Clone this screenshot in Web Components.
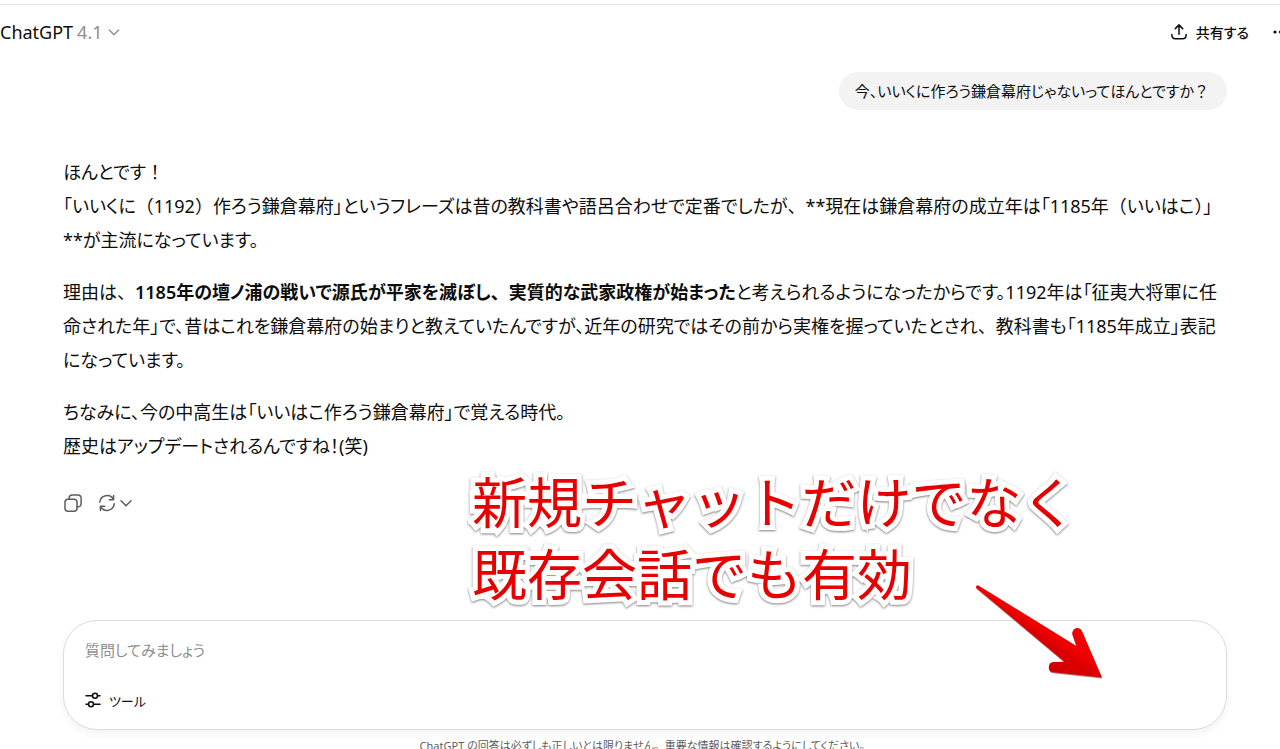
<!DOCTYPE html>
<html lang="ja">
<head>
<meta charset="utf-8">
<meta name="viewport" content="width=device-width, initial-scale=1">
<title>ChatGPT</title>
<style>
  body {
    margin: 0;
    background: #fff;
    color: #0d0d0d;
    font-family: "Noto Sans", "Noto Sans CJK JP", sans-serif;
    font-feature-settings: "palt";
    overflow: hidden;
  }
</style>
</head>
<body>
<chat-app></chat-app>

<template id="t-app">
  <style>
    :host { display: block; padding-top: 4px; }
    main { display: block; padding: 13px 53px 0 63px; }
    /* full-width punctuation keeps its whole em box */
    i { font-style: normal; font-feature-settings: normal; }
    strong { font-weight: 600; }
    chat-actions { margin-top: 30px; }
    .dock { position: relative; margin-top: 107px; }
    call-out { position: absolute; left: 409px; bottom: 123px; }
    pointer-arrow { position: absolute; right: 117px; top: -40px; }
    footer { margin-top: 6px; text-align: center; font-size: 11px; line-height: 20px; color: #5d5d5d; white-space: nowrap; }
  </style>
  <chat-header></chat-header>
  <main>
    <user-message>今、いいくに作ろう鎌倉幕府じゃないってほんとですか<i>？</i></user-message>
    <assistant-message>
      <p>ほんとです<i>！</i><br>「いいくに<i>（</i>1192<i>）</i>作ろう鎌倉幕府」というフレーズは昔の教科書や語呂合わせで定番でしたが<i>、</i>**現在は鎌倉幕府の成立年は「1185年<i>（</i>いいはこ<i>）</i>」<br>**が主流になっています。</p>
      <p>理由は<i>、</i><strong>1185年の壇ノ浦の戦いで源氏が平家を滅ぼし<i>、</i>実質的な武家政権が始まった</strong>と考えられるようになったからです。1192年は「征夷大将軍に任<br>命された年」で、昔はこれを鎌倉幕府の始まりと教えていたんですが、近年の研究ではその前から実権を握っていたとされ<i>、</i>教科書も「1185年成立」表記<br>になっています。</p>
      <p>ちなみに、今の中高生は「いいはこ作ろう鎌倉幕府」で覚える時代<i>。</i><br>歴史はアップデートされるんですね！(笑)</p>
    </assistant-message>
    <chat-actions></chat-actions>
    <div class="dock">
      <chat-composer></chat-composer>
      <call-out>新規チャットだけでなく<br>既存会話でも有効</call-out>
      <pointer-arrow></pointer-arrow>
    </div>
    <footer>ChatGPT の回答は必ずしも正しいとは限りません<i>。</i>重要な情報は確認するようにしてください<i>。</i></footer>
  </main>
</template>

<template id="t-header">
  <style>
    :host { display: block; border-top: 1px solid #e3e3e3; overflow: hidden; }
    header { display: flex; align-items: center; justify-content: space-between; height: 54px; margin-right: -12px; }
    button { display: flex; align-items: center; border: 0; padding: 0; background: none; color: inherit; font: inherit; font-feature-settings: inherit; }
    .model { font-size: 18px; gap: 4px; }
    .model span { color: #8f8f8f; }
    .right { display: flex; align-items: center; gap: 23px; }
    .share { font-size: 14px; font-weight: 500; gap: 8px; }
    svg { display: block; }
  </style>
  <header>
    <button class="model" type="button">ChatGPT <span>4.1</span>
      <svg width="14" height="14" viewBox="0 0 14 14" fill="none" stroke="#8f8f8f" stroke-width="1.4" stroke-linecap="round" stroke-linejoin="round"><path d="M2.3 5 7 9.7 11.7 5"/></svg>
    </button>
    <div class="right">
      <button class="share" type="button">
        <svg width="18" height="18" viewBox="0 0 18 18" fill="none" stroke="#0d0d0d" stroke-width="1.5" stroke-linecap="round" stroke-linejoin="round"><path d="M9 11.3V2M5.3 5.6 9 1.9l3.700 3.700M1.900 11.400v1.200a3.200 3.200 0 0 0 3.200 3.200h7.800a3.200 3.200 0 0 0 3.200-3.200v-1.200"/></svg>
        共有する
      </button>
      <button type="button" aria-label="その他">
        <svg width="20" height="20" viewBox="0 0 20 20" fill="#0d0d0d"><circle cx="3" cy="10" r="1.600"/><circle cx="8.500" cy="10" r="1.600"/><circle cx="14" cy="10" r="1.600"/></svg>
      </button>
    </div>
  </header>
</template>

<template id="t-user">
  <style>
    :host { display: flex; justify-content: flex-end; }
    div { padding: 7px 18px 7px 16px; border-radius: 19px; background: #f3f3f3; font-size: 15px; line-height: 24px; white-space: nowrap; }
  </style>
  <div><slot></slot></div>
</template>

<template id="t-assistant">
  <style>
    :host { display: block; margin-top: 45px; font-size: 18px; line-height: 34px; white-space: nowrap; }
    ::slotted(p) { margin: 0 0 18px; }
    ::slotted(p:last-of-type) { margin-bottom: 0; }
  </style>
  <slot></slot>
</template>

<template id="t-actions">
  <style>
    :host { display: flex; gap: 14px; align-items: center; }
    button { display: flex; align-items: center; gap: 2px; border: 0; padding: 0; background: none; }
    svg { display: block; fill: none; stroke: #5d5d5d; stroke-width: 1.5; stroke-linecap: round; stroke-linejoin: round; }
  </style>
  <button type="button" aria-label="コピー">
    <svg width="20" height="20" viewBox="0 0 20 20"><rect x="2" y="6.200" width="12" height="12" rx="3"/><path d="M6.200 6V4.900a3 3 0 0 1 3-3h5.900a3 3 0 0 1 3 3v5.900a3 3 0 0 1-3 3H14.200"/></svg>
  </button>
  <button type="button" aria-label="再生成">
    <svg width="20" height="20" viewBox="0 0 20 20"><path d="M2.800 9.200A7.200 7.200 0 0 1 16.300 6.400M16.600 2.500v4.200h-4.200M17.200 10.800A7.200 7.200 0 0 1 3.700 13.600M3.400 17.500v-4.200h4.200"/></svg>
    <svg width="14" height="14" viewBox="0 0 14 14"><path d="M2 4.800 7 9.800l5-5"/></svg>
  </button>
</template>

<template id="t-composer">
  <style>
    :host { display: block; }
    form { display: flex; flex-direction: column; align-items: flex-start; gap: 25px; box-sizing: border-box; padding: 16px 21px 17px; border: 1px solid #dcdcdc; border-radius: 34px; background: #fff; box-shadow: 0 4px 8px rgba(0,0,0,.05); }
    input { width: 100%; height: 26px; box-sizing: border-box; padding: 0; border: 0; outline: 0; background: none; color: inherit; font: inherit; font-feature-settings: inherit; font-size: 15px; }
    input::placeholder { color: #8f8f8f; opacity: 1; }
    button { display: flex; align-items: center; gap: 8px; height: 24px; border: 0; padding: 0; background: none; color: inherit; font: inherit; font-feature-settings: inherit; font-size: 13px; }
    svg { display: block; fill: none; stroke: #0d0d0d; stroke-width: 1.5; stroke-linecap: round; }
  </style>
  <form>
    <input type="text" aria-label="質問" placeholder="質問してみましょう">
    <button type="button">
      <svg width="16" height="18" viewBox="0 0 16 18"><path d="M1 4.700h6.500M12.500 4.700H15M1 13.300h2.500M8.500 13.300H15"/><circle cx="10" cy="4.700" r="2.500"/><circle cx="6" cy="13.300" r="2.500"/></svg>
      ツール
    </button>
  </form>
</template>

<template id="t-callout">
  <style>
    :host {
      display: block; color: #e60000; font-size: 55px; line-height: 72px; font-weight: 400;
      font-family: "Noto Sans CJK JP", sans-serif; font-feature-settings: normal; white-space: nowrap;
      -webkit-text-stroke: 10px #fff; paint-order: stroke fill; stroke-linejoin: round;
      filter: drop-shadow(0 1px 1px rgba(0,0,0,.5));
    }
  </style>
  <slot></slot>
</template>

<template id="t-arrow">
  <style>
    :host { display: block; filter: drop-shadow(0 1px 0 rgba(90,0,0,.5)); }
    svg { display: block; }
  </style>
  <svg width="140" height="105" viewBox="970 580 140 105" aria-hidden="true">
    <defs><linearGradient id="g" x1="1050" y1="665" x2="1073" y2="630" gradientUnits="userSpaceOnUse"><stop offset="0" stop-color="#d40000"/><stop offset=".45" stop-color="#dc0000"/><stop offset=".6" stop-color="#f00000"/></linearGradient></defs>
    <path fill="url(#g)" d="M978.400 585.500 1076.500 646 1072.600 634.800A5 5 0 0 1 1082.200 631.500L1102 677.500 1053.300 672.300A5.200 5.200 0 0 1 1053.300 662L1064.500 661.700 976.500 588A1.600 1.600 0 0 1 978.400 585.500Z"/>
  </svg>
</template>

<script>
  const parts = {
    'chat-header': 't-header',
    'user-message': 't-user',
    'assistant-message': 't-assistant',
    'chat-actions': 't-actions',
    'chat-composer': 't-composer',
    'call-out': 't-callout',
    'pointer-arrow': 't-arrow',
    'chat-app': 't-app'
  };
  for (const [name, id] of Object.entries(parts)) {
    customElements.define(name, class extends HTMLElement {
      constructor() {
        super();
        this.attachShadow({ mode: 'open' }).append(document.getElementById(id).content.cloneNode(true));
      }
    });
  }
</script>
</body>
</html>
